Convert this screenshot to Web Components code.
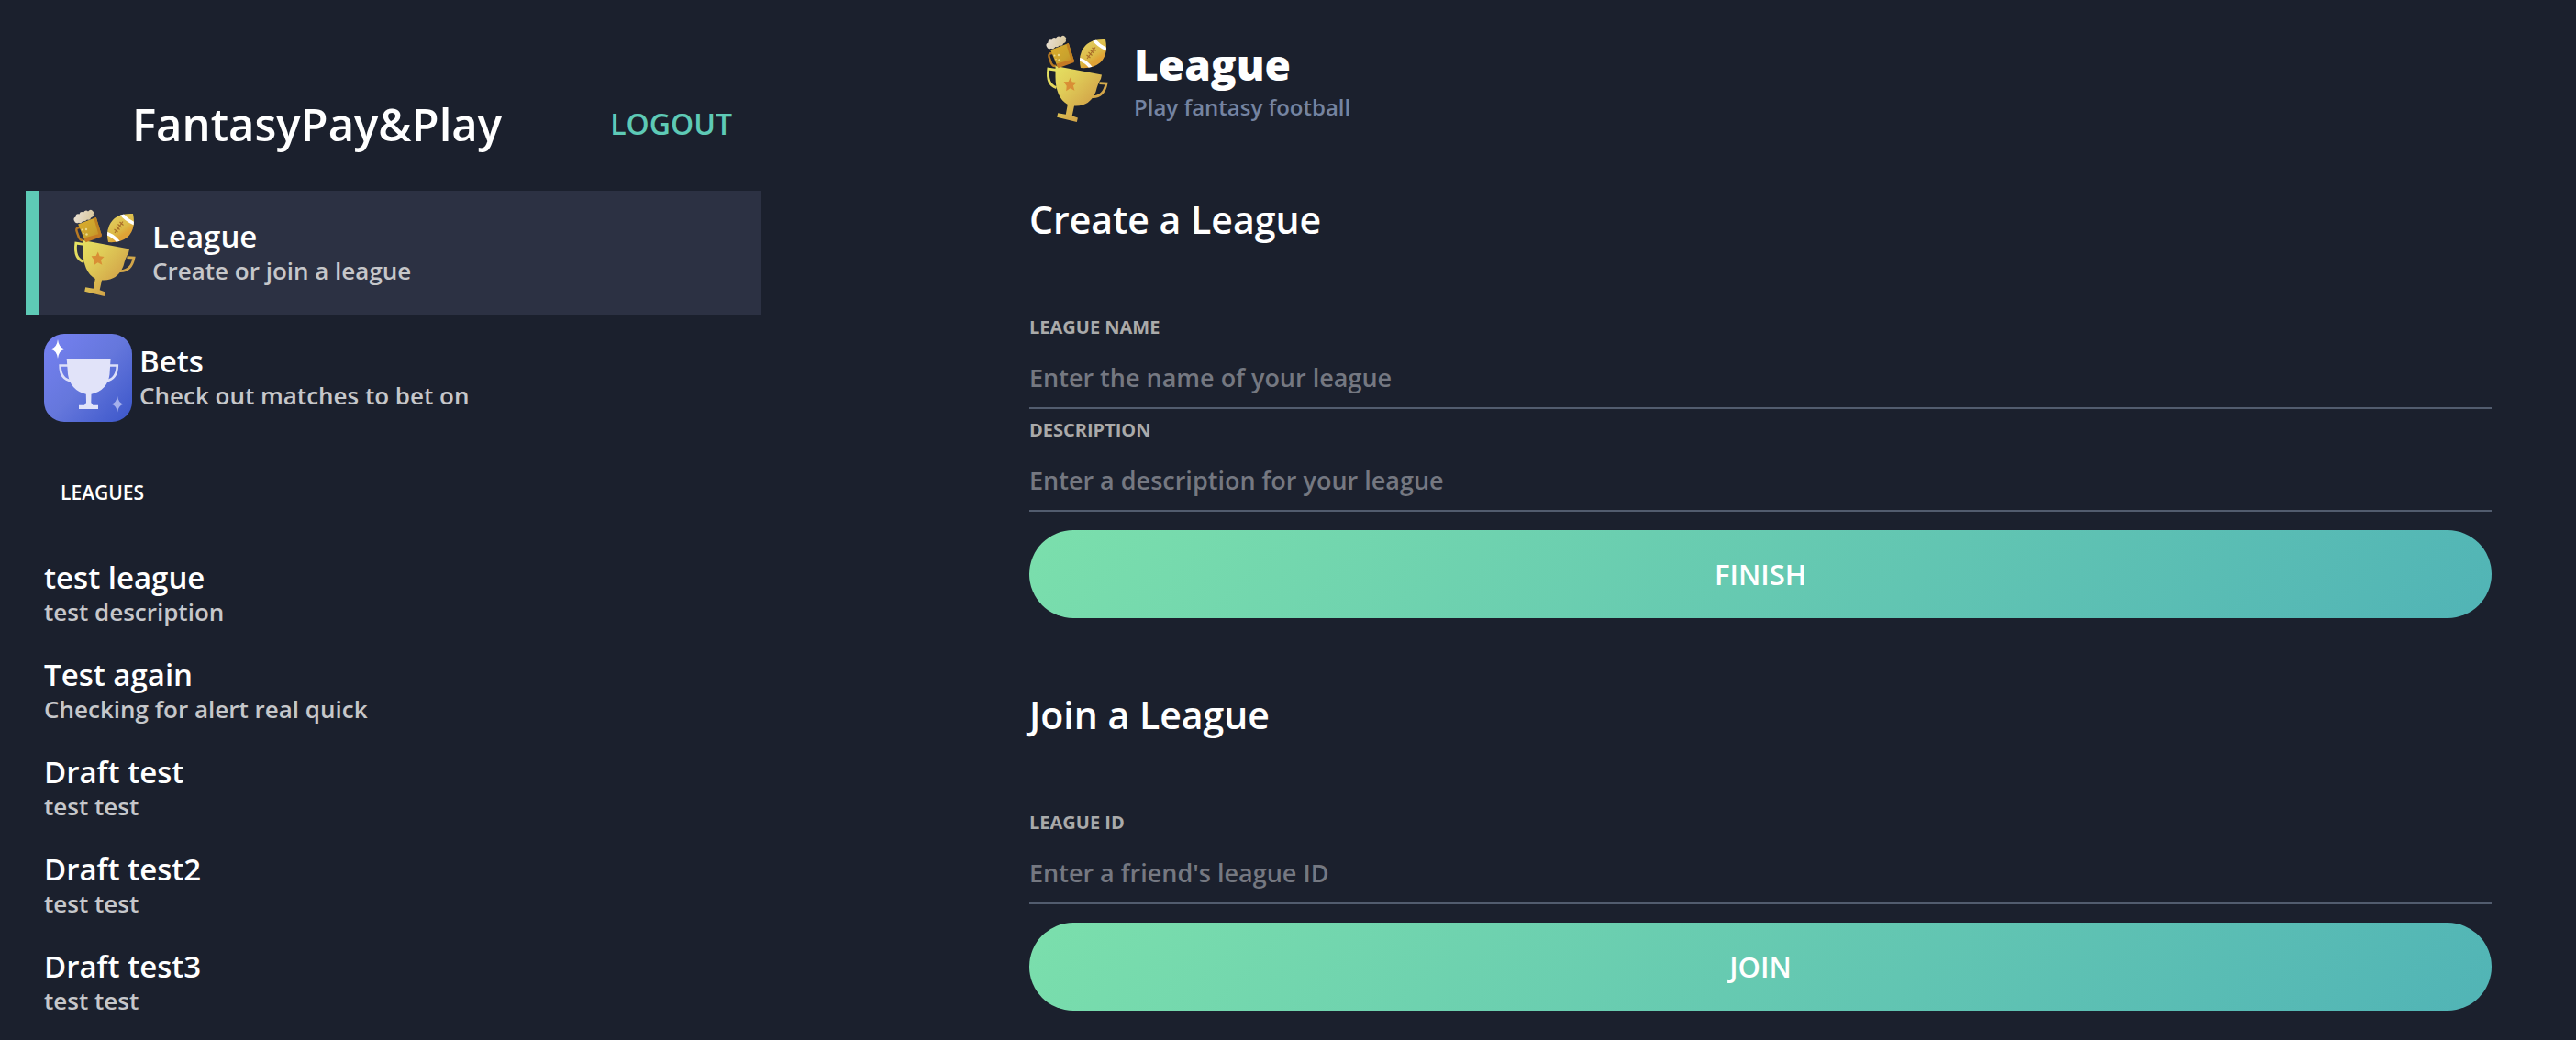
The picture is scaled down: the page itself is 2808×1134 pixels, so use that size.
<!DOCTYPE html>
<html lang="en">
<head>
<meta charset="utf-8">
<title>FantasyPay&amp;Play</title>
<style>
  html { background: #1b202d; }
  body { margin: 0; font-family: "Open Sans", "Noto Sans", sans-serif; font-weight: 600; color: #fff; }
</style>
</head>
<body>
<fantasy-app></fantasy-app>

<template id="t-app">
  <style>
    :host { display: grid; grid-template-columns: 842px minmax(0, 1fr); min-height: 100vh; background: #1b202d; }
    aside { padding: 62px 12px 0 28px; }
    header { display: flex; align-items: center; justify-content: space-between; height: 146px; padding: 0 32px 0 116px; }
    h1 { margin: 0; font-size: 49px; line-height: 64px; font-weight: 600; }
    .logout { font: inherit; font-size: 32px; line-height: 40px; color: #5ecab6; background: none; border: 0; padding: 0; cursor: pointer; }
    .caption { margin: 0; padding: 43px 38px 44px; font-size: 21px; line-height: 28px; font-weight: 600; }
    nav { display: flex; flex-direction: column; }
    main { display: flex; flex-direction: column; gap: 78px; padding: 38px 92px 32px 280px; }
    .intro { display: flex; align-items: center; gap: 18px; height: 96px; }
    .intro h2 { margin: 0; font-size: 46px; line-height: 62px; font-weight: 800; }
    .intro p { margin: 0; font-size: 24px; line-height: 32px; color: #7584a1; }
  </style>
  <aside>
    <header><h1>FantasyPay&amp;Play</h1><button class="logout" type="button">LOGOUT</button></header>
    <nav aria-label="Sections">
      <nav-item active><league-icon slot="icon"></league-icon><span slot="title">League</span><span slot="detail">Create or join a league</span></nav-item>
      <nav-item><bets-icon slot="icon"></bets-icon><span slot="title">Bets</span><span slot="detail">Check out matches to bet on</span></nav-item>
    </nav>
    <h2 class="caption">LEAGUES</h2>
    <nav aria-label="Leagues">
      <nav-item><span slot="title">test league</span><span slot="detail">test description</span></nav-item>
      <nav-item><span slot="title">Test again</span><span slot="detail">Checking for alert real quick</span></nav-item>
      <nav-item><span slot="title">Draft test</span><span slot="detail">test test</span></nav-item>
      <nav-item><span slot="title">Draft test2</span><span slot="detail">test test</span></nav-item>
      <nav-item><span slot="title">Draft test3</span><span slot="detail">test test</span></nav-item>
    </nav>
  </aside>
  <main>
    <div class="intro">
      <league-icon></league-icon>
      <div><h2>League</h2><p>Play fantasy football</p></div>
    </div>
    <league-form heading="Create a League" action-label="FINISH">
      <text-field label="LEAGUE NAME" placeholder="Enter the name of your league"></text-field>
      <text-field label="DESCRIPTION" placeholder="Enter a description for your league"></text-field>
    </league-form>
    <league-form heading="Join a League" action-label="JOIN">
      <text-field label="LEAGUE ID" placeholder="Enter a friend's league ID"></text-field>
    </league-form>
  </main>
</template>

<template id="t-nav-item">
  <style>
    :host { display: block; }
    a { display: flex; align-items: center; gap: 8px; padding: 16px 20px; color: #fff; text-decoration: none; }
    :host([active]) a { background: #2c3143; border-left: 14px solid #5ecab6; }
    .text { display: flex; flex-direction: column; }
    .title { font-size: 33px; line-height: 38px; }
    .detail { font-size: 26px; line-height: 36px; color: #c6c7ca; }
    ::slotted([slot="icon"]) { margin: 4px 0; }
  </style>
  <a href="#"><slot name="icon"></slot><span class="text"><span class="title"><slot name="title"></slot></span><span class="detail"><slot name="detail"></slot></span></span></a>
</template>

<template id="t-form">
  <style>
    :host { display: block; }
    form { display: flex; flex-direction: column; }
    h2 { margin: 0 0 68px; font-size: 41px; line-height: 54px; font-weight: 600; }
    button { margin-top: 20px; height: 96px; border: 0; border-radius: 48px; font: inherit; font-size: 31px; color: #fff; cursor: pointer;
      background: linear-gradient(135deg, #7bdfac 0%, #51b4b6 100%); }
  </style>
  <form><h2></h2><slot></slot><button type="button"></button></form>
</template>

<template id="t-field">
  <style>
    :host { display: block; padding-top: 9px; }
    label { display: block; font-size: 20px; line-height: 28px; font-weight: 700; color: #aaa; }
    input { display: block; box-sizing: border-box; width: 100%; height: 75px; padding: 7px 0 0; border: 0; border-bottom: 2px solid #525c6e;
      border-radius: 0; background: none; font: inherit; font-size: 27px; color: #fff; outline: none; }
    input::placeholder { color: #757881; opacity: 1; }
  </style>
  <label for="field"></label><input id="field" type="text">
</template>

<template id="t-league-icon">
  <style>:host { display: block; flex: none; width: 96px; height: 96px; } svg { display: block; }</style>
  <svg width="96" height="96" viewBox="0 0 96 96" aria-hidden="true">
    <defs>
      <linearGradient id="cup" x1="20" y1="36" x2="72" y2="84" gradientUnits="userSpaceOnUse"><stop offset="0" stop-color="#e6e564"/><stop offset=".4" stop-color="#e0cd58"/><stop offset="1" stop-color="#cf9a45"/></linearGradient>
      <linearGradient id="ball" x1="60" y1="8" x2="78" y2="34" gradientUnits="userSpaceOnUse"><stop offset="0" stop-color="#e2cd60"/><stop offset=".55" stop-color="#dcb945"/><stop offset=".75" stop-color="#e0a335"/><stop offset="1" stop-color="#dda03a"/></linearGradient>
      <linearGradient id="beer" x1="26" y1="14" x2="46" y2="34" gradientUnits="userSpaceOnUse"><stop offset="0" stop-color="#d9ab2c"/><stop offset=".6" stop-color="#c9a22d"/><stop offset="1" stop-color="#c98423"/></linearGradient>
      <linearGradient id="foam" x1="22" y1="6" x2="40" y2="12" gradientUnits="userSpaceOnUse"><stop offset="0" stop-color="#e6dccb"/><stop offset="1" stop-color="#d8c69a"/></linearGradient>
      <clipPath id="ballclip"><path d="M83 5C85.500 16 83 25 77 30.500Q69 37 56 36Q53.500 26 57 18Q63 4 83 5Z"/></clipPath>
    </defs>
    <path d="M25 20Q20.500 20 21.500 24L24 31Q26 35 29.500 33.500" fill="none" stroke="#b97a22" stroke-width="2.400"/>
    <g fill="none" stroke="url(#cup)" stroke-width="2.800">
      <path d="M29.500 38.300L20.800 37.100Q18.500 54 29.500 57.600"/>
      <path d="M76.500 52.600L84 53.100Q81 68.500 68 67.600"/>
    </g>
    <path d="M28.500 34L79 43.500L78 48C75.500 52 74 56 72.500 62Q66 78.500 49 77.500L46.700 88.300L52.900 90.500L51.800 95L30.200 89.700L31.200 85.200L39.800 86.700L41.800 76C33 71 28.500 60 28.500 46Z" fill="url(#cup)"/>
    <path d="M44.800 46.400L46.600 51.300L51.600 51.900L47.900 55.500L49.400 60.800L44.600 58.300L40.200 61.200L40.700 55.800L37.600 51.200L42.600 50.900Z" fill="#d98e35"/>
    <path d="M23.200 16.500L42.800 9L48.800 28.500L30.800 35Z" fill="url(#beer)"/>
    <path d="M40.300 10L42.800 9L48.800 28.500L46 29.500Z" fill="#c08021"/>
    <path d="M29.500 31.500L48.500 26.500L48.800 30L31.500 36.200Z" fill="#c47a24"/>
    <g fill="#ead98b"><circle cx="27.500" cy="22.500" r="1"/><circle cx="32" cy="22" r="1.200"/><circle cx="32.500" cy="27.500" r="1.200"/><circle cx="29" cy="26.500" r=".7"/></g>
    <path d="M20 14.500Q16.500 10 20.500 8.500Q20.500 4.500 24.500 5.500Q25.500 2 29 3.500Q31.500 .3 34 2.500Q36.500 -.3 38.500 1.600Q41.500 4 39.700 5.500Q41 8.500 37 9.500Q36.500 12.500 33 11.500Q31 14 28.500 13Q26 16.500 24 14.800Q21.500 16 20 14.500Z" fill="url(#foam)"/>
    <g clip-path="url(#ballclip)">
      <path d="M52 2H88V38H52Z" fill="url(#ball)"/>
      <path d="M69 3.500Q75 12 86 16.500" fill="none" stroke="#fff" stroke-width="3.600"/>
      <path d="M53 26Q62 28.500 68 37" fill="none" stroke="#fff" stroke-width="3.600"/>
    </g>
    <path d="M63 26L72 13.500M62.500 22L66.500 25M64.500 19L68.500 22.500M66.500 16.500L70.500 20M68.500 14L72.500 17.500" fill="none" stroke="#a96d29" stroke-width="1.100"/>
  </svg>
</template>

<template id="t-bets-icon">
  <style>:host { display: block; flex: none; width: 96px; height: 96px; } svg { display: block; }</style>
  <svg width="96" height="96" viewBox="0 0 96 96" aria-hidden="true">
    <defs><linearGradient id="tile" x1="6" y1="6" x2="94" y2="88" gradientUnits="userSpaceOnUse"><stop offset="0" stop-color="#7480ef"/><stop offset=".5" stop-color="#6577dc"/><stop offset="1" stop-color="#3f59cb"/></linearGradient></defs>
    <rect width="96" height="96" rx="22" fill="url(#tile)"/>
    <g fill="none" stroke="#dcdff8" stroke-width="2.600">
      <path d="M26 34.500H17.600Q17.500 49.500 30 51.500"/><path d="M71.500 34.500H79.800Q79.500 49.500 67.500 51.500"/>
    </g>
    <path d="M24.700 27H72.600L71.500 44Q69.500 61.500 51.500 65.800L51.300 75L53.300 77.700H59V82H38V77.700H44L46 75L45.800 65.800Q28.500 61.500 26 44Z" fill="#e1e3f9"/>
    <path d="M15 6Q16 15 22.500 16.700Q16 18 15 27Q14 18 7.500 16.700Q14 15 15 6Z" fill="#fff"/>
    <path d="M80 67.700Q81 75 86.500 76.700Q81 78 80 85.700Q79 78 73.500 76.700Q79 75 80 67.700Z" fill="#a5b1ec"/>
  </svg>
</template>

<script>
  class TemplateElement extends HTMLElement {
    constructor() {
      super();
      const template = document.getElementById(this.constructor.template);
      this.attachShadow({ mode: 'open' }).append(template.content.cloneNode(true));
    }
  }
  class LeagueIcon extends TemplateElement { static template = 't-league-icon'; }
  class BetsIcon extends TemplateElement { static template = 't-bets-icon'; }
  class NavItem extends TemplateElement {
    static template = 't-nav-item';
    connectedCallback() {
      if (this.hasAttribute('active')) this.shadowRoot.querySelector('a').setAttribute('aria-current', 'page');
    }
  }
  class TextField extends TemplateElement {
    static template = 't-field';
    connectedCallback() {
      this.shadowRoot.querySelector('label').textContent = this.getAttribute('label');
      this.shadowRoot.querySelector('input').placeholder = this.getAttribute('placeholder');
    }
  }
  class LeagueForm extends TemplateElement {
    static template = 't-form';
    connectedCallback() {
      this.shadowRoot.querySelector('h2').textContent = this.getAttribute('heading');
      this.shadowRoot.querySelector('button').textContent = this.getAttribute('action-label');
    }
  }
  class FantasyApp extends TemplateElement { static template = 't-app'; }
  customElements.define('league-icon', LeagueIcon);
  customElements.define('bets-icon', BetsIcon);
  customElements.define('nav-item', NavItem);
  customElements.define('text-field', TextField);
  customElements.define('league-form', LeagueForm);
  customElements.define('fantasy-app', FantasyApp);
</script>
</body>
</html>
